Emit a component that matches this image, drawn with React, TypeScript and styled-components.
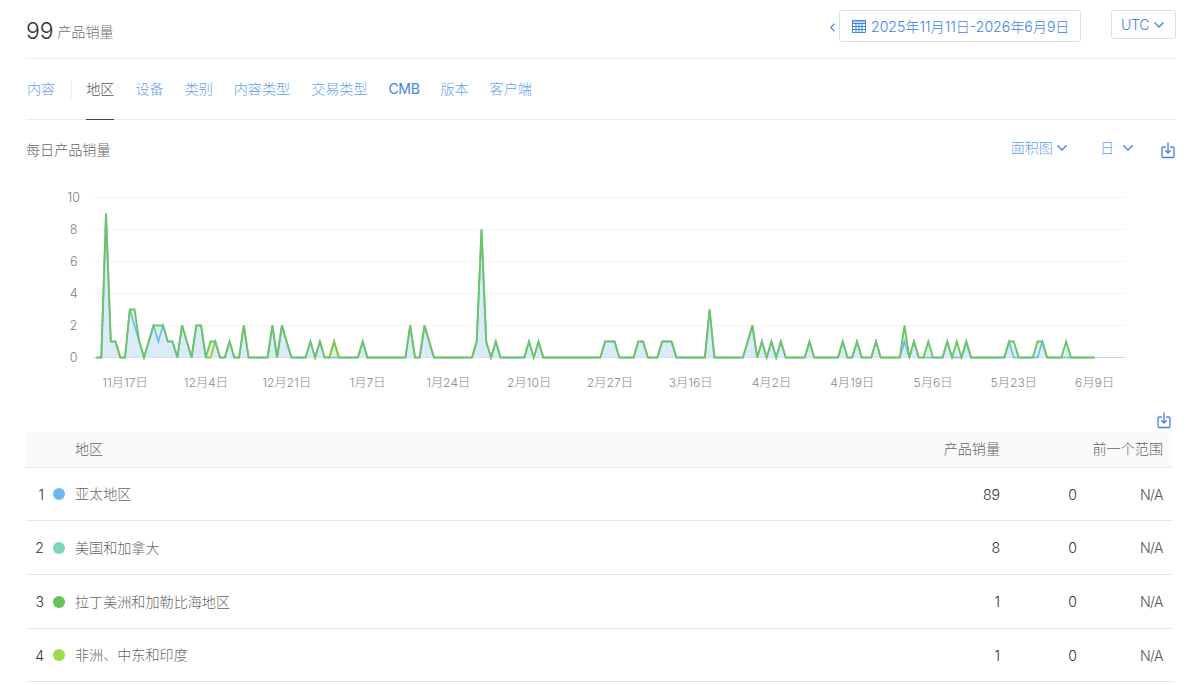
import React from "react";
import styled, { createGlobalStyle } from "styled-components";

const Global = createGlobalStyle`
  * { box-sizing: border-box; }
  body { margin: 0; background: #fff; }
`;
const LINK = "#3f83e8";
const LINK_SOFT = "#6a9ff0";

const Page = styled.main`
  width: 1199px;
  height: 685px;
  overflow: hidden;
  padding: 0 23px 0 26px;
  display: flex;
  flex-direction: column;
  background: #fff;
  color: #666;
  font-family: Inter, "Noto Sans CJK SC", sans-serif;
  font-size: 14.1px;
  font-weight: 300;
`;
const Header = styled.header`
  height: 59px;
  display: flex;
  justify-content: space-between;
  border-bottom: 1px solid #ebebed;
`;
const Total = styled.h1`
  margin: 0;
  padding-top: 16px;
  display: flex;
  align-items: flex-start;
  gap: 4px;
  font-size: 14.1px;
  line-height: 31px;
  font-weight: 300;
  color: #707070;
`;
const TotalValue = styled.span`
  font-size: 23px;
  letter-spacing: -0.2px;
  color: #333;
`;
const HeaderTools = styled.div`
  display: flex;
  padding-top: 10px;
  color: ${LINK};
`;
const Previous = styled.span`
  display: flex;
  padding: 13px 4px 0 0;
  height: 32px;
`;
const PickerButton = styled.div<{ $w: number; $h: number; $left: number; $pad: number }>`
  width: ${(p) => p.$w}px;
  height: ${(p) => p.$h}px;
  margin-left: ${(p) => p.$left}px;
  padding-left: ${(p) => p.$pad}px;
  display: flex;
  align-items: center;
  gap: 5px;
  border: 1px solid #dfdfe1;
  border-radius: 3px;
  white-space: nowrap;
`;
const PickerText = styled.span<{ $spacing: number }>`
  letter-spacing: ${(p) => p.$spacing}px;
  line-height: 20px;
  padding-top: 1px;
`;
const Tabs = styled.nav`
  height: 61px;
  display: flex;
  border-bottom: 1px solid #ebebed;
  padding-left: 1px;
  color: ${LINK_SOFT};
`;
const Tab = styled.a<{ $active?: boolean; $latin?: boolean; $gap: number }>`
  height: 61px;
  margin-right: ${(p) => p.$gap}px;
  padding-top: 20px;
  line-height: 20px;
  white-space: nowrap;
  letter-spacing: ${(p) => (p.$latin ? "-0.45px" : "normal")};
  font-weight: ${(p) => (p.$latin ? 400 : 300)};
  color: ${(p) => (p.$active ? "#555" : p.$latin ? LINK : "inherit")};
  border-bottom: ${(p) => (p.$active ? "1px solid #444" : "0")};
`;
const TabDivider = styled.span`
  width: 1px;
  height: 18px;
  margin: 22px 14px 0 0;
  background: #ececee;
`;
const ChartHeader = styled.div`
  height: 60px;
  display: flex;
  justify-content: space-between;
`;
const ChartTitle = styled.h2`
  margin: 0;
  padding-top: 20px;
  font-size: 14.1px;
  font-weight: 300;
  line-height: 20px;
`;
const ChartTools = styled.div`
  display: flex;
  padding: 18px 1px 0 0;
  line-height: 20px;
  color: ${LINK_SOFT};
`;
const Dropdown = styled.span<{ $gap: number; $right: number }>`
  display: flex;
  align-items: center;
  height: 20px;
  gap: ${(p) => p.$gap}px;
  margin-right: ${(p) => p.$right}px;
`;
const Download = styled.span`
  display: flex;
  padding-top: 4px;
`;
const ChartArea = styled.svg`
  display: block;
  flex: none;
  margin-left: -26px;
  font-family: Inter, "Noto Sans CJK SC", sans-serif;
  font-weight: 300;
`;
const TableTools = styled.div`
  height: 32px;
  display: flex;
  justify-content: flex-end;
  padding: 12px 5px 0 0;
`;
const Row = styled.div<{ $head?: boolean; $h: number }>`
  width: 1146px;
  height: ${(p) => p.$h}px;
  flex: none;
  display: grid;
  grid-template-columns: 18px 31px 1fr 120px 77px 86px;
  align-items: center;
  padding: 0 9px ${(p) => (p.$head ? 1 : 0)}px 0;
  border-bottom: 1px solid #e9e9eb;
  background: ${(p) => (p.$head ? "#fafafa" : "transparent")};
`;
const Cell = styled.span<{ $right?: boolean; $span?: number }>`
  grid-column: span ${(p) => p.$span ?? 1};
  text-align: ${(p) => (p.$right ? "right" : "left")};
  line-height: 20px;
  white-space: nowrap;
`;
const NumberCell = styled(Cell)`
  color: #333;
  padding-top: 1px;
`;
const ChangeCell = styled(Cell)`
  color: #555;
  letter-spacing: -0.6px;
  padding-top: 1px;
`;
const Dot = styled.i<{ $color: string }>`
  width: 12px;
  height: 12px;
  margin-left: 9px;
  border-radius: 50%;
  background: ${(p) => p.$color};
`;

const Chevron = () => (
  <svg width="10" height="6" viewBox="0 0 10 6" fill="none" stroke={LINK} strokeWidth="1.3" strokeLinecap="round" strokeLinejoin="round">
    <path d="M.8.8 5 5 9.2.8" />
  </svg>
);
const DownloadIcon = () => (
  <svg width="14" height="17" viewBox="0 0 14 17" fill="none" stroke={LINK} strokeWidth="1.3" strokeLinecap="round" strokeLinejoin="round">
    <path d="M4.3 5H2.2Q1 5 1 6.2v8.1q0 1.2 1.2 1.2h9.6q1.2 0 1.2-1.2V6.2Q13 5 11.8 5H9.7M7 .8v10M4.6 8.7 7 11l2.4-2.3" />
  </svg>
);
const CalendarIcon = () => (
  <svg width="14" height="13" viewBox="0 0 14 13" fill="none" stroke={LINK}>
    <path d="M.5.5h13v12H.5zM.5 3.5h13M.5 6.5h13M.5 9.5h13M4 3.5v9M7 3.5v9M10 3.5v9" strokeWidth="1" />
    <path d="M.5 1.5h13" strokeWidth="2" strokeOpacity=".55" />
  </svg>
);

const DAYS = 211;
const asiaPacific: Record<number, number> = {
  2: 9, 3: 1, 4: 1, 7: 3, 8: 2, 9: 1, 11: 1, 12: 2, 13: 1, 14: 2, 15: 1, 16: 1, 18: 2, 19: 1,
  21: 2, 22: 2, 25: 1, 28: 1, 31: 2, 37: 2, 39: 2, 40: 1, 45: 1, 47: 1, 56: 1, 66: 2, 69: 2, 70: 1,
  80: 1, 81: 8, 82: 1, 84: 1, 91: 1, 93: 1, 107: 1, 108: 1, 109: 1, 114: 1, 115: 1, 119: 1, 120: 1,
  121: 1, 129: 3, 137: 1, 138: 2, 140: 1, 142: 1, 144: 1, 150: 1, 157: 1, 160: 1, 164: 1, 170: 1,
  172: 1, 179: 1, 183: 1, 192: 1, 199: 1,
};
const northAmerica: Record<number, number> = { 8: 1, 13: 1, 170: 1, 175: 1, 181: 1, 193: 1, 198: 1, 204: 1 };
const others: Record<number, number> = { 24: 1, 50: 1 };

const px = (i: number) => 96.5 + i * 4.753;
const py = (v: number) => 177.5 - v * 16;
const base = Array.from({ length: DAYS }, (_, i) => asiaPacific[i] ?? 0);
const america = base.map((v, i) => v + (northAmerica[i] ?? 0));
const all = america.map((v, i) => v + (others[i] ?? 0));
const points = (s: number[]) => s.map((v, i) => `${px(i).toFixed(1)},${py(v)}`);
const line = (s: number[]) => `M${points(s).join("L")}`;
const band = (top: number[], bottom: number[]) => `${line(top)}L${points(bottom).reverse().join("L")}Z`;
const zero = base.map(() => 0);

const dates = ["11月17日", "12月4日", "12月21日", "1月7日", "1月24日", "2月10日", "2月27日", "3月16日", "4月2日", "4月19日", "5月6日", "5月23日", "6月9日"];

const Chart = () => (
  <ChartArea width="1173" height="220" viewBox="0 0 1173 220" fill="none">
    {[10, 8, 6, 4, 2, 0].map((v) => (
      <g key={v}>
        <path d={`M94 ${py(v)}H1125`} stroke={v ? "#f5f5f6" : "#d4d4d6"} />
        <text x="73.7" y={py(v) + 4.2} textAnchor="middle" fontSize="12.6" fill="#808080">{v}</text>
      </g>
    ))}
    <path d={band(base, zero)} fill="#dcebfa" />
    <path d={band(america, base)} fill="#ddf6ea" />
    <path d={band(all, america)} fill="#e6f8c8" />
    <g strokeLinejoin="miter">
      <path d={line(base)} stroke="#6fb9ef" strokeWidth="1.7" />
      <path d={`M${px(23)} ${py(0)}H${px(24)}L${px(25)} ${py(1)}`} stroke="#a3cb58" strokeWidth="1.8" />
      <path d={line(all)} stroke="#6ec465" strokeWidth="1.9" />
      <path d={`M${px(49)} ${py(0)}L${px(50)} ${py(1)}L${px(51)} ${py(0)}`} stroke="#80c858" strokeWidth="1.8" />
    </g>
    {dates.map((d, i) => (
      <text key={d} x={px(6 + i * 17)} y="206.5" textAnchor="middle" fontSize="12.2" fill="#888">{d}</text>
    ))}
  </ChartArea>
);

const regions = [
  { name: "亚太地区", color: "#70b8f0", sales: 89, h: 53 },
  { name: "美国和加拿大", color: "#7dd6b9", sales: 8, h: 54 },
  { name: "拉丁美洲和加勒比海地区", color: "#68c258", sales: 1, h: 54 },
  { name: "非洲、中东和印度", color: "#9cdb49", sales: 1, h: 53 },
];
const tabs: [string, number][] = [["设备", 21], ["类别", 21], ["内容类型", 21], ["交易类型", 21], ["CMB", 21], ["版本", 21], ["客户端", 0]];

export default function App() {
  return (
    <Page>
      <Global />
      <Header>
        <Total><TotalValue>99</TotalValue>产品销量</Total>
        <HeaderTools>
          <Previous>
            <svg width="5" height="9" viewBox="0 0 5 9" fill="none" stroke={LINK} strokeWidth="1.2"><path d="M4.5.7.8 4.5l3.7 3.8" /></svg>
          </Previous>
          <PickerButton $w={242} $h={32} $left={0} $pad={12}>
            <CalendarIcon />
            <PickerText $spacing={0}>2025年11月11日-2026年6月9日</PickerText>
          </PickerButton>
          <PickerButton $w={65} $h={29} $left={30} $pad={9}>
            <PickerText $spacing={-0.3}>UTC</PickerText>
            <Chevron />
          </PickerButton>
        </HeaderTools>
      </Header>
      <Tabs>
        <Tab $gap={16}>内容</Tab>
        <TabDivider />
        <Tab $active $gap={21}>地区</Tab>
        {tabs.map(([label, gap]) => <Tab key={label} $gap={gap} $latin={label === "CMB"}>{label}</Tab>)}
      </Tabs>
      <ChartHeader>
        <ChartTitle>每日产品销量</ChartTitle>
        <ChartTools>
          <Dropdown $gap={4} $right={33}>面积图<Chevron /></Dropdown>
          <Dropdown $gap={9} $right={28}>日<Chevron /></Dropdown>
          <Download><DownloadIcon /></Download>
        </ChartTools>
      </ChartHeader>
      <Chart />
      <TableTools><DownloadIcon /></TableTools>
      <Row $head $h={36}>
        <Cell $span={2} />
        <Cell>地区</Cell>
        <Cell $right>产品销量</Cell>
        <Cell $right $span={2}>前一个范围</Cell>
      </Row>
      {regions.map((r, i) => (
        <Row key={r.name} $h={r.h}>
          <NumberCell $right>{i + 1}</NumberCell>
          <Dot $color={r.color} />
          <Cell>{r.name}</Cell>
          <NumberCell $right>{r.sales}</NumberCell>
          <NumberCell $right>0</NumberCell>
          <ChangeCell $right>N/A</ChangeCell>
        </Row>
      ))}
    </Page>
  );
}
